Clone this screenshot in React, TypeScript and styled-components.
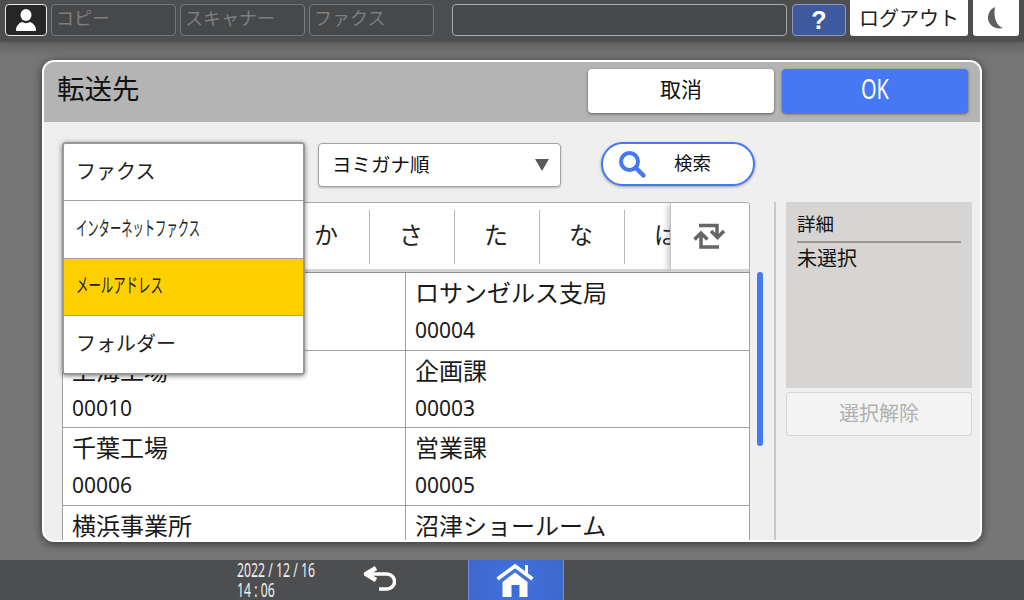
import React from "react";
import styled, { createGlobalStyle } from "styled-components";

const Global = createGlobalStyle`
  html, body { margin: 0; padding: 0; width: 1024px; height: 600px; overflow: hidden; }
  * { box-sizing: border-box; }
  body { font-family: "Noto Sans CJK JP", "Noto Sans", sans-serif; color: #111; }
`;

const Page = styled.div`
  width: 1024px; height: 600px; display: flex; flex-direction: column;
  background: #747474;
`;
const TopBar = styled.header`
  height: 40px; flex: none; background: #4d4e50; display: flex; align-items: flex-start;
  padding: 4px 4px 0 5px; box-shadow: 0 1px 3px rgba(0,0,0,.3); position: relative; z-index: 1;
`;
const UserBtn = styled.div`
  width: 42px; height: 32px; border: 1px solid #e8e8e8; border-radius: 4px; background: #262626;
  display: flex; align-items: center; justify-content: center; margin-right: 4px;
`;
const AppTab = styled.div`
  width: 125px; height: 32px; margin-right: 4px; border: 1px solid #77787a; border-radius: 4px; background: #47484a;
  color: #7d7e80; font-size: 18px; line-height: 24px; padding-left: 4px; white-space: nowrap;
`;
const Message = styled.div`
  width: 335px; height: 32px; margin-left: 14px; border: 1px solid #aaabac; border-radius: 4px; background: #47484a;
`;
const Help = styled.div`
  width: 54px; height: 32px; margin-left: 5px; border: 1px solid #8e9bb8; border-radius: 4px; background: #3d5a9f;
  color: #fff; font: 700 25px/30px "Liberation Sans", sans-serif; text-align: center;
`;
const Logout = styled.div`
  width: 118px; height: 36px; margin-left: 4px; background: #fff; border-radius: 0 0 3px 3px;
  font-size: 20px; line-height: 35px; text-align: center; color: #222; position: relative; top: -4px; white-space: nowrap;
`;
const Night = styled.div`
  width: 46px; height: 36px; margin-left: 5px; background: #fff; border-radius: 0 0 3px 3px;
  display: flex; align-items: center; justify-content: center; position: relative; top: -4px;
`;
const Main = styled.main`
  flex: 1; min-height: 0; padding: 20px 42px 18px; background: linear-gradient(#5f5f5f 0, #767676 16px, #777 100%);
`;
const Dialog = styled.section`
  position: relative; height: 482px; border: 2px solid #fff; border-radius: 12px; overflow: hidden; background: #efefef;
  box-shadow: 0 2px 10px rgba(0,0,0,.55); display: flex; flex-direction: column;
`;
const DialogHead = styled.div`
  height: 60px; flex: none; background: #b4b4b4; display: flex; align-items: center; padding: 0 12px 2px 13px;
`;
const Title = styled.h1`
  flex: 1; margin: 0; font-size: 27.5px; font-weight: 400; line-height: 1; position: relative; top: -3px;
`;
const HeadBtn = styled.div<{ $primary?: boolean }>`
  width: 186px; height: 44px; margin-left: 8px; border-radius: 4px;
  background: ${p => (p.$primary ? "#4578f2" : "#fff")}; color: ${p => (p.$primary ? "#fff" : "#111")};
  box-shadow: 0 1px 3px rgba(0,0,0,.5); display: flex; align-items: center; justify-content: center;
  font-size: 21px; line-height: 38px; padding-bottom: 6px;
`;
const Narrow = styled.span<{ $x: number }>`
  display: inline-block; transform: scaleX(${p => p.$x}); transform-origin: left center; white-space: nowrap;
`;
const OkLabel = styled.span`
  display: inline-block; transform: scaleX(.74); font-size: 27px; line-height: 1; font-family: "Noto Sans", sans-serif;
`;
const Body = styled.div`
  flex: 1; min-height: 0; display: flex; padding: 20px 8px 0 18px;
`;
const Left = styled.div`
  width: 688px; flex: none; display: flex; flex-direction: column;
`;
const Controls = styled.div`
  height: 60px; flex: none; display: flex; align-items: flex-start; padding-left: 256px;
`;
const SortSelect = styled.div`
  width: 243px; flex: none; height: 44px; margin-top: 1px; background: #fff; border: 1px solid #a5a5a5; border-radius: 4px;
  box-shadow: 0 1px 2px rgba(0,0,0,.25); display: flex; align-items: center; justify-content: space-between;
  padding: 0 11px 3px 13px; font-size: 19.5px;
`;
const Caret = styled.div`
  width: 0; height: 0; margin-top: 3px; border-left: 7px solid transparent; border-right: 7px solid transparent; border-top: 12px solid #5a5a5a;
`;
const SearchBtn = styled.div`
  width: 154px; flex: none; height: 44px; margin-left: 40px; background: #fff; border: 2px solid #4578f2; border-radius: 22px;
  box-shadow: 0 1px 3px rgba(0,0,0,.35); display: flex; align-items: center; padding-left: 14px; font-size: 18.5px;
`;
const SearchLabel = styled.span`
  margin-left: 27px; position: relative; top: -2px;
`;
const KanaRow = styled.div`
  height: 70px; flex: none; display: flex; background: #fff; border: 1px solid #aaa; border-bottom: 0; border-radius: 4px 4px 0 0;
  overflow: hidden;
`;
const KanaStrip = styled.div`
  flex: 1; min-width: 0; display: flex; overflow: hidden; padding: 7px 0 5px; position: relative;
  border-bottom: 3px solid #d4d4d4;
`;
const KanaCell = styled.div<{ $w: number }>`
  width: ${p => p.$w}px; flex: none; border-right: 1px solid #b8b8b8; display: flex; align-items: center; justify-content: center;
  font-size: 24px; color: #222; padding: 0 2px 7px 0;
`;
const FlipBtn = styled.div`
  width: 79px; flex: none; border-left: 1px solid #c4c4c4; box-shadow: -5px 0 5px -2px rgba(120,120,120,.35);
  display: flex; align-items: center; justify-content: center; background: #fff; border-bottom: 3px solid #d4d4d4; position: relative;
`;
const TableTop = styled.div`
  height: 1px; flex: none; background: #8d8d8d;
`;
const Table = styled.div`
  flex: 1; min-height: 0; overflow: hidden; background: #fff; border-left: 1px solid #a0a0a0; border-right: 1px solid #a0a0a0;
  display: grid; grid-template-columns: 342px 1fr; grid-auto-rows: 77.6px; align-content: start;
`;
const Cell = styled.div<{ $right?: boolean }>`
  padding: 0 0 0 9px; border-bottom: 1px solid #a0a0a0; overflow: hidden;
  border-left: ${p => (p.$right ? "1px solid #a0a0a0" : "0")}; font-size: 24px; line-height: 38px; color: #1a1a1a; white-space: nowrap;
`;
const CellNum = styled.div`
  font-size: 21px; line-height: 38px; font-family: "Noto Sans", sans-serif;
`;
const ScrollZone = styled.div`
  width: 24px; flex: none; padding: 130px 0 0 7px;
`;
const ScrollThumb = styled.div`
  width: 6px; height: 174px; border-radius: 3px; background: #4578f2;
`;
const Rule = styled.div`
  width: 2px; flex: none; margin-top: 60px; background: #c9c9c9;
`;
const Right = styled.aside`
  width: 186px; flex: none; margin-left: 10px; padding-top: 60px; display: flex; flex-direction: column;
`;
const Detail = styled.div`
  height: 186px; background: #d6d5d3; padding: 8px 11px 0; font-size: 18.5px;
`;
const DetailHead = styled.div`
  height: 33px; line-height: 26px; border-bottom: 2px solid #999794;
`;
const DetailText = styled.div`
  line-height: 26px; padding-top: 2px; font-size: 20px;
`;
const ClearBtn = styled.div`
  height: 44px; margin-top: 4px; background: #f3f3f3; border: 1px solid #d6d6d6; border-radius: 3px; padding-bottom: 3px;
  display: flex; align-items: center; justify-content: center; color: #b0b0b0; font-size: 20px;
`;
const Menu = styled.div`
  position: absolute; left: 18px; top: 80px; width: 243px; height: 233px; background: #fff;
  border: 2px solid #989898; border-radius: 4px; box-shadow: 0 1px 5px rgba(0,0,0,.5); overflow: hidden; z-index: 2;
`;
const MenuItem = styled.div<{ $active?: boolean; $last?: boolean }>`
  height: 57.3px; padding: 0 0 4px 12px; display: flex; align-items: center;
  background: ${p => (p.$active ? "#ffd000" : "#fff")}; font-size: 20px; color: #222;
  border-bottom: ${p => (p.$last ? "0" : "1px solid #a0a0a0")};
`;
const BottomBar = styled.footer`
  height: 40px; flex: none; background: #4d4e50; display: flex; align-items: center; position: relative;
`;
const Clock = styled.div`
  width: 120px; margin-left: 237px; color: #f0f0f0; font-size: 19px; line-height: 20px; font-family: "Noto Sans", sans-serif;
`;
const Back = styled.div`
  margin-left: 3px; width: 36px; height: 40px; display: flex; align-items: center; justify-content: center;
`;
const HomeBtn = styled.div`
  width: 96px; height: 40px; margin-left: 72px; border-left: 1px solid #6d8fdd; border-right: 1px solid #6d8fdd;
  background: radial-gradient(circle at 50% 55%, #4675e4 0, #3f6cd6 45%, #3f68c9 100%);
  display: flex; align-items: center; justify-content: center;
`;

const rows = [
  ["本社", "00001", "ロサンゼルス支局", "00004"],
  ["上海工場", "00010", "企画課", "00003"],
  ["千葉工場", "00006", "営業課", "00005"],
  ["横浜事業所", "00008", "沼津ショールーム", "00007"],
];

export default function App() {
  return (
    <Page>
      <Global />
      <TopBar>
        <UserBtn>
          <svg width="30" height="26" viewBox="0 0 30 26">
            <ellipse cx="15" cy="8" rx="5.500" ry="6" fill="#fff" />
            <path d="M5 23c0-4 3-7 6-8 2.500 1.500 5.500 1.500 8 0 3 1 6 4 6 8 0 .6-.4 1-1 1H6c-.6 0-1-.4-1-1z" fill="#fff" />
          </svg>
        </UserBtn>
        <AppTab>コピー</AppTab>
        <AppTab>スキャナー</AppTab>
        <AppTab>ファクス</AppTab>
        <Message />
        <Help>?</Help>
        <Logout>ログアウト</Logout>
        <Night>
          <svg width="22" height="24" viewBox="0 0 22 24">
            <path d="M10 1C5 3 3 8 3 12c0 6 6 12 15 10-6-2-10-10-8-21z" fill="#5e5e5e" />
          </svg>
        </Night>
      </TopBar>
      <Main>
        <Dialog>
          <DialogHead>
            <Title>転送先</Title>
            <HeadBtn>取消</HeadBtn>
            <HeadBtn $primary><OkLabel>OK</OkLabel></HeadBtn>
          </DialogHead>
          <Body>
            <Left>
              <Controls>
                <SortSelect>ヨミガナ順<Caret /></SortSelect>
                <SearchBtn>
                  <svg width="30" height="30" viewBox="0 0 30 30">
                    <circle cx="12.500" cy="12.500" r="8.500" fill="none" stroke="#4578f2" strokeWidth="4" />
                    <path d="M19 19l7.500 7.500" stroke="#4578f2" strokeWidth="4.500" strokeLinecap="round" />
                  </svg>
                  <SearchLabel>検索</SearchLabel>
                </SearchBtn>
              </Controls>
              <KanaRow>
                <KanaStrip>
                  <KanaCell $w={137}>全て</KanaCell>
                  <KanaCell $w={85}>あ</KanaCell>
                  <KanaCell $w={85}>か</KanaCell>
                  <KanaCell $w={85}>さ</KanaCell>
                  <KanaCell $w={85}>た</KanaCell>
                  <KanaCell $w={85}>な</KanaCell>
                  <KanaCell $w={85}>は</KanaCell>
                </KanaStrip>
                <FlipBtn>
                  <svg width="34" height="28" viewBox="0 0 34 28">
                    <path d="M6 3.500H24V15M18 9l6.500 6.500L31 9M8 12V25H26M1.500 17.500L8 11l6.500 6.500" fill="none" stroke="#666" strokeWidth="3.500" />
                  </svg>
                </FlipBtn>
              </KanaRow>
              <TableTop />
              <Table>
                {rows.map(r => (
                  <React.Fragment key={r[1]}>
                    <Cell>{r[0]}<CellNum>{r[1]}</CellNum></Cell>
                    <Cell $right>{r[2]}<CellNum>{r[3]}</CellNum></Cell>
                  </React.Fragment>
                ))}
              </Table>
            </Left>
            <ScrollZone><ScrollThumb /></ScrollZone>
            <Rule />
            <Right>
              <Detail>
                <DetailHead>詳細</DetailHead>
                <DetailText>未選択</DetailText>
              </Detail>
              <ClearBtn>選択解除</ClearBtn>
            </Right>
          </Body>
          <Menu>
            <MenuItem>ファクス</MenuItem>
            <MenuItem><Narrow $x={0.565}>インターネットファクス</Narrow></MenuItem>
            <MenuItem $active><Narrow $x={0.62}>メールアドレス</Narrow></MenuItem>
            <MenuItem $last>フォルダー</MenuItem>
          </Menu>
        </Dialog>
      </Main>
      <BottomBar>
        <Clock>
          <Narrow $x={0.645}>2022 / 12 / 16</Narrow><br />
          <Narrow $x={0.645}>14 : 06</Narrow>
        </Clock>
        <Back>
          <svg width="36" height="30" viewBox="0 0 36 30">
            <path d="M6 9H27a7.500 7.500 0 0 1 0 15H19" fill="none" stroke="#fff" strokeWidth="3.500" />
            <path d="M16 3L6 9l10 6" fill="none" stroke="#fff" strokeWidth="4.500" strokeLinejoin="round" />
          </svg>
        </Back>
        <HomeBtn>
          <svg width="44" height="36" viewBox="0 0 44 36">
            <path d="M31 3h3v10h-3z" fill="#fff" />
            <path d="M3.500 17L21 4l17.500 13" fill="none" stroke="#fff" strokeWidth="3.500" />
            <path d="M8.500 20L21 10.500 33.500 20v15H8.500z" fill="#fff" />
            <path d="M17.500 23h8v12h-8z" fill="#3f6cd6" />
          </svg>
        </HomeBtn>
      </BottomBar>
    </Page>
  );
}
